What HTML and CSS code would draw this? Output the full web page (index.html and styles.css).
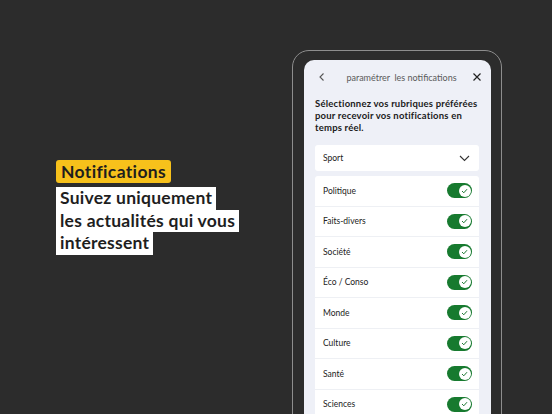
FILE: index.html
```html
<!DOCTYPE html>
<html lang="fr">
<head>
<meta charset="utf-8">
<link rel="stylesheet" href="styles.css">
</head>
<body>
<div class="page">
  <div class="promo">
    <span class="tag">Notifications</span>
    <div class="lines">
      <span class="line">Suivez uniquement</span>
      <span class="line">les actualités qui vous</span>
      <span class="line">intéressent</span>
    </div>
  </div>
  <div class="phone">
    <div class="screen">
      <div class="header">
        <svg class="ico" width="10" height="10" viewBox="0 0 10 10"><path d="M6.5 1.5 L3 5 L6.5 8.5" fill="none" stroke="#555" stroke-width="1.1"/></svg>
        <span class="title">paramétrer&nbsp; les notifications</span>
        <svg class="ico" width="10" height="10" viewBox="0 0 10 10"><path d="M1.5 1.5 L8.5 8.5 M8.5 1.5 L1.5 8.5" fill="none" stroke="#222" stroke-width="1.2"/></svg>
      </div>
      <p class="intro">Sélectionnez vos rubriques préférées pour recevoir vos notifications en temps réel.</p>
      <div class="select">
        <span>Sport</span>
        <svg width="11" height="7" viewBox="0 0 11 7"><path d="M1 1 L5.5 5.5 L10 1" fill="none" stroke="#333" stroke-width="1.1"/></svg>
      </div>
      <div class="list">
        <div class="row"><span>Politique</span><span class="toggle"><span class="knob"><svg width="7" height="6" viewBox="0 0 7 6"><path d="M1 3 L2.8 4.8 L6 1.2" fill="none" stroke="#1d7a34" stroke-width="1"/></svg></span></span></div>
        <div class="row"><span>Faits-divers</span><span class="toggle"><span class="knob"><svg width="7" height="6" viewBox="0 0 7 6"><path d="M1 3 L2.8 4.8 L6 1.2" fill="none" stroke="#1d7a34" stroke-width="1"/></svg></span></span></div>
        <div class="row"><span>Société</span><span class="toggle"><span class="knob"><svg width="7" height="6" viewBox="0 0 7 6"><path d="M1 3 L2.8 4.8 L6 1.2" fill="none" stroke="#1d7a34" stroke-width="1"/></svg></span></span></div>
        <div class="row"><span>Éco / Conso</span><span class="toggle"><span class="knob"><svg width="7" height="6" viewBox="0 0 7 6"><path d="M1 3 L2.8 4.8 L6 1.2" fill="none" stroke="#1d7a34" stroke-width="1"/></svg></span></span></div>
        <div class="row"><span>Monde</span><span class="toggle"><span class="knob"><svg width="7" height="6" viewBox="0 0 7 6"><path d="M1 3 L2.8 4.8 L6 1.2" fill="none" stroke="#1d7a34" stroke-width="1"/></svg></span></span></div>
        <div class="row"><span>Culture</span><span class="toggle"><span class="knob"><svg width="7" height="6" viewBox="0 0 7 6"><path d="M1 3 L2.8 4.8 L6 1.2" fill="none" stroke="#1d7a34" stroke-width="1"/></svg></span></span></div>
        <div class="row"><span>Santé</span><span class="toggle"><span class="knob"><svg width="7" height="6" viewBox="0 0 7 6"><path d="M1 3 L2.8 4.8 L6 1.2" fill="none" stroke="#1d7a34" stroke-width="1"/></svg></span></span></div>
        <div class="row"><span>Sciences</span><span class="toggle"><span class="knob"><svg width="7" height="6" viewBox="0 0 7 6"><path d="M1 3 L2.8 4.8 L6 1.2" fill="none" stroke="#1d7a34" stroke-width="1"/></svg></span></span></div>
      </div>
    </div>
  </div>
</div>
</body>
</html>
```
FILE: styles.css
```css
* { box-sizing: border-box; }
html, body { margin: 0; padding: 0; }
body {
  background: #2c2c2c;
  font-family: Lato, "Noto Sans", sans-serif;
  width: 552px;
  height: 414px;
  overflow: hidden;
}
.page {
  display: flex;
  height: 414px;
  overflow: hidden;
}
.promo {
  width: 292px;
  flex-shrink: 0;
  padding: 160px 0 0 56px;
  display: flex;
  flex-direction: column;
  align-items: flex-start;
  gap: 4px;
  white-space: nowrap;
}
.tag {
  background: #f7c11b;
  color: #1e1e1e;
  font-weight: 700;
  font-size: 17.5px;
  line-height: 23px;
  padding: 0 5px;
  border-radius: 3px;
  letter-spacing: 0.35px;
}
.lines {
  display: flex;
  flex-direction: column;
  align-items: flex-start;
}
.line {
  background: #ffffff;
  color: #1e1e1e;
  font-weight: 700;
  font-size: 17.5px;
  line-height: 22.7px;
  padding: 0 4px;
  letter-spacing: 0.25px;
}
.phone {
  margin-top: 50px;
  width: 210px;
  height: 420px;
  border: 1.5px solid #8d8d8d;
  border-radius: 17px;
  padding: 9px 10px 0 11px;
  flex-shrink: 0;
}
.screen {
  background: #eef0f7;
  border-radius: 10px 10px 0 0;
  height: 100%;
  padding: 0 12px 0 11px;
}
.header {
  height: 34px;
  display: flex;
  align-items: center;
  justify-content: space-between;
  padding: 0 0 0 2px;
  margin-right: -3px;
}
.title {
  font-size: 9px;
  color: #5a5a5a;
  margin-left: 4px;
}
.intro {
  margin: 4px 0 0;
  font-size: 9.5px;
  line-height: 12px;
  font-weight: 700;
  letter-spacing: 0.2px;
  color: #1b1b1b;
}
.select {
  margin-top: 11px;
  height: 26px;
  background: #fff;
  border-radius: 3px;
  display: flex;
  align-items: center;
  justify-content: space-between;
  padding: 0 9px 0 8px;
  font-size: 8.5px;
  color: #222;
}
.list {
  margin-top: 5px;
  background: #fff;
  border-radius: 3px;
}
.row {
  height: 30.5px;
  display: flex;
  align-items: center;
  justify-content: space-between;
  padding: 0 7px 0 8px;
  font-size: 8.5px;
  color: #222;
  border-bottom: 1px solid #eef0f4;
}
.toggle {
  width: 25px;
  height: 15px;
  border-radius: 8px;
  background: #177a2f;
  display: flex;
  align-items: center;
  justify-content: flex-end;
  padding-right: 1.5px;
}
.knob {
  width: 12px;
  height: 12px;
  border-radius: 50%;
  background: #fff;
  display: flex;
  align-items: center;
  justify-content: center;
}
```
